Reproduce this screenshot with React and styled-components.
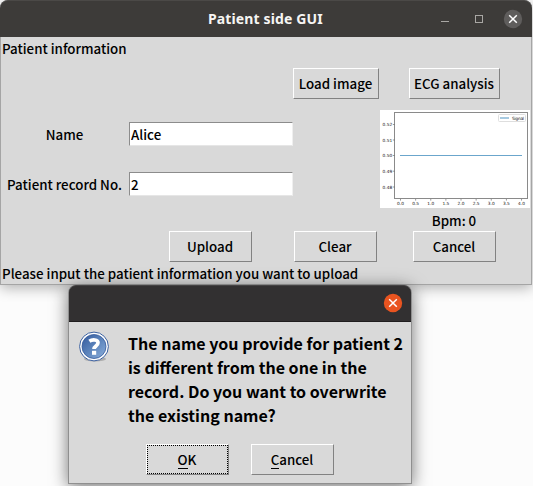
import React from "react";
import styled, { createGlobalStyle, css } from "styled-components";

const Global = createGlobalStyle`
  * { box-sizing: border-box; }
  body { margin: 0; background: #fcfcfc; overflow: hidden; }
  button, input { font: inherit; color: inherit; letter-spacing: inherit; border-radius: 0; margin: 0; }
`;

const Desktop = styled.div`
  position: relative;
  width: 533px;
  height: 486px;
  overflow: hidden;
  background: #fcfcfc;
  color: #000;
  font: 500 13.33px/20px "Noto Sans CJK SC", "Noto Sans", sans-serif;
  white-space: nowrap;
`;

const MainWindow = styled.main`
  width: 532px;
  height: 285px;
  display: flex;
  flex-direction: column;
  background: #d9d9d9;
  border: 1px solid #a5a5a5;
  border-top: 0;
  border-radius: 8px 8px 0 0;
  box-shadow: 0 3px 14px rgba(0, 0, 0, 0.3);
`;

const TitleBar = styled.header`
  flex: none;
  height: 37px;
  margin: 0 -1px;
  padding: 0 9px 1px 0;
  display: flex;
  align-items: center;
  justify-content: flex-end;
  background: #3d3b39;
  border-top: 1px solid #4b4947;
  border-radius: 8px 8px 0 0;
`;

const Title = styled.h1`
  flex: 1;
  margin: 0;
  padding-left: 208px;
  color: #f6f5f3;
  font: 700 14px/20px "Noto Sans", sans-serif;
  letter-spacing: 0.13px;
`;

const Controls = styled.div`
  display: flex;
  align-items: center;
  gap: 13px;
`;

const Caption = styled.div`
  height: 23px;
  padding: 2px 0 0 1px;
`;

const TopActions = styled.div`
  display: flex;
  gap: 30px;
  margin-top: 8px;
  padding-left: 292px;
`;

const Button = styled.button`
  width: ${(p) => p.$w}px;
  height: 31px;
  padding: 0 1px 0 0;
  background: #d9d9d9;
  border: 1px solid;
  border-color: #fff #828282 #828282 #fff;
  line-height: 20px;
  ${(p) => p.$focus && css`
    outline: 1px dotted #000;
    outline-offset: -2px;
  `}
`;

const Middle = styled.div`
  display: flex;
  height: 132px;
`;

const Form = styled.div`
  width: 292px;
  margin-right: 87px;
  padding-top: 23px;
  display: grid;
  grid-template-columns: 128px 164px;
  grid-auto-rows: 24px;
  row-gap: 26px;
`;

const Label = styled.label`
  text-align: center;
  line-height: 26px;
  padding-right: 1px;
`;

const Entry = styled.input`
  width: 164px;
  height: 24px;
  padding: 0 1px;
  background: #fff;
  border: 1px solid;
  border-color: #8c8c8c #efefef #e6e6e6 #8c8c8c;
  outline: 0;
`;

const Monitor = styled.div`
  width: 150px;
  padding-top: 11px;
`;

const Plot = styled.svg`
  display: block;
  background: #fff;
`;

const Bpm = styled.div`
  height: 23px;
  line-height: 26px;
  text-align: center;
  padding-right: 2px;
`;

const BottomActions = styled.div`
  display: grid;
  grid-template-columns: 125px 119px 83px;
  padding-left: 168px;
`;

const Status = styled.div`
  padding: 2px 0 0 1px;
  line-height: 20px;
`;

const Dialog = styled.section`
  position: absolute;
  left: 68px;
  top: 285px;
  width: 344px;
  height: 199px;
  background: #d9d9d9;
  border: 1px solid #8f8f8f;
  border-top: 0;
  border-radius: 8px 8px 0 0;
  box-shadow: 0 3px 17px rgba(0, 0, 0, 0.55);
`;

const DialogBar = styled.header`
  height: 37px;
  padding: 0 8px 1px 0;
  display: flex;
  align-items: center;
  justify-content: flex-end;
  background: #323031;
  border-top: 1px solid #454344;
  border-bottom: 1px solid #1f1d1e;
  border-radius: 7px 7px 0 0;
`;

const DialogContent = styled.div`
  display: flex;
  align-items: flex-start;
  padding: 9px 0 0 9px;
  height: 122px;
`;

const Message = styled.p`
  margin: 0 0 0 18px;
  font-size: 16px;
  font-weight: 700;
  line-height: 24px;
`;

const DialogActions = styled.div`
  display: flex;
  gap: 22px;
  padding-left: 77px;
`;

const Mnemonic = styled.span`
  display: inline-block;
  height: 19px;
  border-bottom: 1px solid #000;
`;

const Glyph = styled.svg`
  flex: none;
  display: block;
`;

const CloseIcon = ({ fill }) => (
  <Glyph width="20" height="20" viewBox="0 0 20 20">
    <circle cx="10" cy="10" r="9.2" fill={fill} />
    <path d="M6.2 6.2l7.6 7.6M13.8 6.2l-7.6 7.6" stroke="#fff" strokeWidth="1.5" />
  </Glyph>
);

const WindowIcons = () => (
  <Glyph width="50" height="20" viewBox="0 0 50 20">
    <path d="M1 12.5h8" stroke="#a9a7a4" />
    <rect x="35.5" y="6.5" width="7" height="7" fill="none" stroke="#a9a7a4" />
  </Glyph>
);

const QuestionIcon = () => (
  <Glyph width="32" height="32" viewBox="0 0 32 32">
    <defs>
      <linearGradient id="disc" x1="0" y1="0" x2="1" y2="1">
        <stop offset="0" stopColor="#33599c" />
        <stop offset="0.5" stopColor="#5c84bc" />
        <stop offset="1" stopColor="#8db0dc" />
      </linearGradient>
    </defs>
    <ellipse cx="17" cy="28" rx="11" ry="2.5" fill="#adadad" />
    <circle cx="16" cy="15.5" r="14.4" fill="#fff" stroke="#3b609f" strokeWidth="1" />
    <circle cx="16" cy="15.5" r="12" fill="url(#disc)" stroke="#34599b" strokeWidth="0.8" />
    <path d="M11.4 10.2c2.8-1.9 8.6-1.9 8.6 1.6c0 3.2-4 3-4 6.2" fill="none" stroke="#fff" strokeWidth="3.7" />
    <rect x="14" y="19.8" width="4.2" height="4" fill="#fff" />
  </Glyph>
);

const yTicks = [["0.52", 14.5], ["0.51", 30], ["0.50", 45.5], ["0.49", 61.2], ["0.48", 77]];
const xTicks = ["0.0", "0.5", "1.0", "1.5", "2.0", "2.5", "3.0", "3.5", "4.0"];

const SignalPlot = () => (
  <Plot width="150" height="98" viewBox="0 0 150 98" fontFamily="DejaVu Sans" fontSize="4.3" fill="#111">
    <rect x="14.5" y="2.5" width="133" height="86" fill="none" stroke="#8a8a8a" />
    {yTicks.map(([t, y]) => (
      <g key={t}>
        <path d={`M12.8 ${y}h1.7`} stroke="#555" strokeWidth="0.6" />
        <text x="12.2" y={y + 1.7} textAnchor="end">{t}</text>
      </g>
    ))}
    {xTicks.map((t, i) => (
      <g key={t}>
        <path d={`M${20.5 + i * 15.13} 89v1.6`} stroke="#555" strokeWidth="0.6" />
        <text x={20.5 + i * 15.13} y="94.8" textAnchor="middle">{t}</text>
      </g>
    ))}
    <path d="M20 45.5h122" stroke="#6ba6cc" strokeWidth="1.1" />
    <rect x="118.5" y="4.5" width="27" height="7" rx="1" fill="#fff" stroke="#dedede" />
    <path d="M120 8h9" stroke="#5f9fc8" strokeWidth="1.1" />
    <text x="132" y="9.7" textLength="12">Signal</text>
  </Plot>
);

export default function App() {
  return (
    <Desktop>
      <Global />
      <MainWindow>
        <TitleBar>
          <Title>Patient side GUI</Title>
          <Controls>
            <WindowIcons />
            <CloseIcon fill="#5f5d5c" />
          </Controls>
        </TitleBar>
        <Caption>Patient information</Caption>
        <TopActions>
          <Button $w={86}>Load image</Button>
          <Button $w={91}>ECG analysis</Button>
        </TopActions>
        <Middle>
          <Form>
            <Label htmlFor="name">Name</Label>
            <Entry id="name" defaultValue="Alice" />
            <Label htmlFor="record">Patient record No.</Label>
            <Entry id="record" defaultValue="2" />
          </Form>
          <Monitor>
            <SignalPlot />
            <Bpm>Bpm: 0</Bpm>
          </Monitor>
        </Middle>
        <BottomActions>
          <Button $w={83}>Upload</Button>
          <Button $w={83}>Clear</Button>
          <Button $w={83}>Cancel</Button>
        </BottomActions>
        <Status>Please input the patient information you want to upload</Status>
      </MainWindow>
      <Dialog role="dialog">
        <DialogBar>
          <CloseIcon fill="#e95420" />
        </DialogBar>
        <DialogContent>
          <QuestionIcon />
          <Message>
            The name you provide for patient 2<br />
            is different from the one in the<br />
            record. Do you want to overwrite<br />
            the existing name?
          </Message>
        </DialogContent>
        <DialogActions>
          <Button $w={83} $focus><Mnemonic>O</Mnemonic>K</Button>
          <Button $w={83}><Mnemonic>C</Mnemonic>ancel</Button>
        </DialogActions>
      </Dialog>
    </Desktop>
  );
}
